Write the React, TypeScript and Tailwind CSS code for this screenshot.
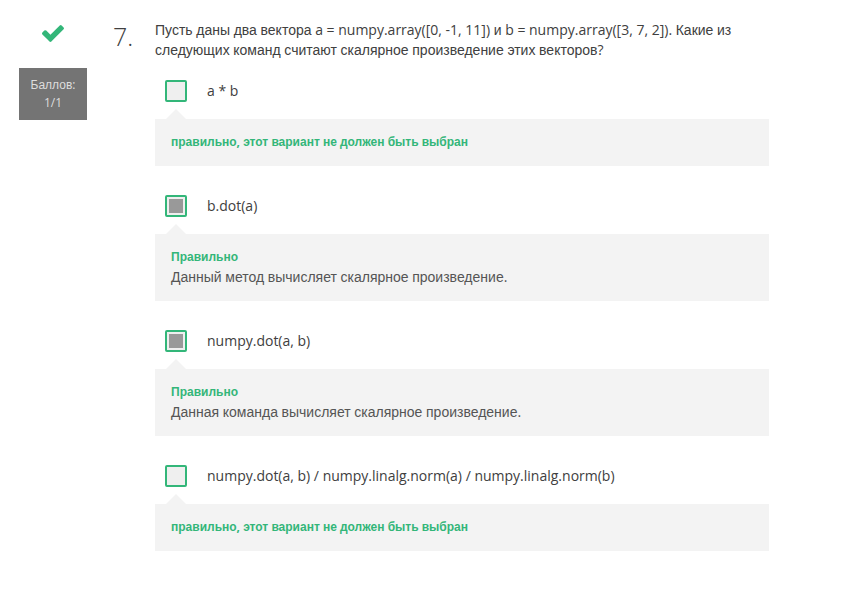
import React, { useState } from 'react';

type Option = {
  id: string;
  label: string;
  checked: boolean;
  verdict: string;
  note?: string;
};

const OPTIONS: Option[] = [
  { id: 'product', label: 'a * b', checked: false, verdict: 'правильно, этот вариант не должен быть выбран' },
  {
    id: 'method',
    label: 'b.dot(a)',
    checked: true,
    verdict: 'Правильно',
    note: 'Данный метод вычисляет скалярное произведение.',
  },
  {
    id: 'function',
    label: 'numpy.dot(a, b)',
    checked: true,
    verdict: 'Правильно',
    note: 'Данная команда вычисляет скалярное произведение.',
  },
  {
    id: 'cosine',
    label: 'numpy.dot(a, b) / numpy.linalg.norm(a) / numpy.linalg.norm(b)',
    checked: false,
    verdict: 'правильно, этот вариант не должен быть выбран',
  },
];

/* Cyrillic words use the Arial-like face, everything else inherits Open Sans. */
function Mixed({ text }: { text: string }) {
  return (
    <>
      {text.split(/([А-Яа-яЁё]+)/).map((part, i) =>
        i % 2 === 1 ? (
          <span key={i} className="font-['Liberation_Sans',sans-serif]">
            {part}
          </span>
        ) : (
          part
        ),
      )}
    </>
  );
}

function CheckMark() {
  return (
    <svg viewBox="121 334 1550 1188" className="h-[17px] w-[22px] fill-[#33b679]" role="img" aria-label="Верно">
      <path d="M1671 566q0 40-28 68l-724 724-136 136q-28 28-68 28t-68-28l-136-136-362-362q-28-28-28-68t28-68l136-136q28-28 68-28t68 28l294 295 656-657q28-28 68-28t68 28l136 136q28 28 28 68z" />
    </svg>
  );
}

function Answer({ option }: { option: Option }) {
  const [checked, setChecked] = useState(option.checked);
  return (
    <li>
      <div className="flex items-center gap-5 pl-[10px]">
        <input
          id={option.id}
          type="checkbox"
          checked={checked}
          onChange={(e) => setChecked(e.target.checked)}
          className="size-[22px] shrink-0 appearance-none rounded-xs border-2 border-[#33b679] bg-[#efefef] checked:bg-[#999999] checked:shadow-[inset_0_0_0_2px_#efefef]"
        />
        <label htmlFor={option.id}>
          <Mixed text={option.label} />
        </label>
      </div>
      <div className="mt-[7px] ml-[11px] h-[10px] w-5 bg-[#f3f3f3] [clip-path:polygon(50%_0,100%_100%,0_100%)]" />
      <div className="bg-[#f3f3f3] px-4 pt-[13px] pb-[14px] text-[#555555]">
        <p className="text-xs/5 font-bold text-[#33b679]">
          <Mixed text={option.verdict} />
        </p>
        {option.note && (
          <p>
            <Mixed text={option.note} />
          </p>
        )}
      </div>
    </li>
  );
}

export default function App() {
  return (
    <main className="flex min-h-screen items-start bg-white pt-5 pr-[85px] pb-10 pl-[19px] font-['Open_Sans',sans-serif] text-sm/5 text-[#404040]">
      <aside className="flex w-[68px] shrink-0 flex-col items-center pt-[5px]">
        <CheckMark />
        <p className="mt-[26px] w-full bg-[#747474] py-2 text-center text-xs/[18px] text-[#dddddd]">
          <Mixed text="Баллов:" />
          <br />
          1/1
        </p>
      </aside>
      <div className="w-[68px] shrink-0 pl-[26px] text-[25px]/8 font-light">7.</div>
      <section className="min-w-0 flex-1">
        <p>
          <Mixed text="Пусть даны два вектора a = numpy.array([0, -1, 11]) и b = numpy.array([3, 7, 2]). Какие из следующих команд считают скалярное произведение этих векторов?" />
        </p>
        <ul className="mt-5 flex flex-col gap-[29px]">
          {OPTIONS.map((option) => (
            <Answer key={option.id} option={option} />
          ))}
        </ul>
      </section>
    </main>
  );
}
